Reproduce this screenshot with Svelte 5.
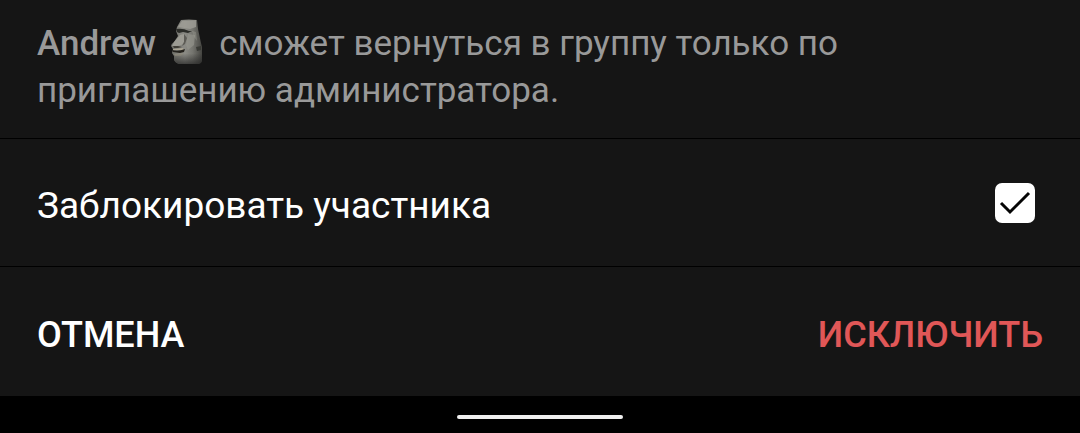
<script>
  let blocked = $state(true);
</script>

<main class="sheet">
  <p class="message">
    <strong>Andrew</strong>
    <svg class="moai" viewBox="0 0 34 46" role="img" aria-label="🗿">
      <defs>
        <linearGradient id="stone" x1="0" y1="0" x2="1" y2="0">
          <stop offset="0" stop-color="#6f6f69" />
          <stop offset=".45" stop-color="#8b8b85" />
          <stop offset=".7" stop-color="#75756f" />
          <stop offset="1" stop-color="#454541" />
        </linearGradient>
        <linearGradient id="base" x1="0" y1="0" x2="0" y2="1">
          <stop offset=".3" stop-color="#222" stop-opacity="0" />
          <stop offset="1" stop-color="#222" stop-opacity=".7" />
        </linearGradient>
      </defs>
      <path fill="url(#stone)" d="M11 1Q19 0 27 1L28 10L31 24L32 28V42Q31 45 27 45H11Q6 45 4 41L4 37L2 34L3 30L1 27Q1 25 4 23L8 17L6 12L7 8Z" />
      <path fill="#a09f97" d="M12 2L26 1L26 8L20 10L8 8Z" opacity=".8" />
      <path fill="#2b2c28" d="M6 10Q13 9 19 12L22 12L18 14L13 13L9 14L7 13Z" />
      <path fill="#9c9b93" d="M10 16L14 15L14 23Q12 27 7 27H2L4 23Z" />
      <path fill="#5c5b55" d="M14 15L17 19L15 25L12 27L14 23Z" />
      <path fill="#403e37" d="M3 27L8 27L12 28L8 29L4 29Z" />
      <path fill="#aaa493" d="M3 30L13 29L14 31H3Z" />
      <path fill="#24221d" d="M2 31Q8 33 15 30L14 33L10 34L3 33Z" />
      <path fill="#8e8b7f" d="M4 35L14 34L11 37H5Z" />
      <path fill="#393a35" d="M26 28L31 27L31 31L27 32Z" />
      <path fill="#97978f" d="M18 15L25 16L24 26L18 31L16 26Z" opacity=".6" />
      <path fill="#a09f97" d="M22 12L26 13L27 22L24 18Z" opacity=".4" />
      <path fill="url(#base)" d="M4 30H32V42Q31 45 27 45H11Q6 45 4 41Z" />
    </svg>
    сможет вернуться в группу только по приглашению администратора.
  </p>

  <label class="option">
    <span>Заблокировать участника</span>
    <span class="check">
      <input type="checkbox" bind:checked={blocked} />
      {#if blocked}
        <svg viewBox="0 0 40 40" aria-hidden="true">
          <path d="M6 20L15 29L34 10" fill="none" stroke="#050505" stroke-width="3" />
        </svg>
      {/if}
    </span>
  </label>

  <div class="actions">
    <button type="button">ОТМЕНА</button>
    <button type="button" class="danger">ИСКЛЮЧИТЬ</button>
  </div>
</main>
<div class="navigation"><span></span></div>

<style>
  :global(body) {
    margin: 0;
    background: #000;
  }
  .sheet {
    background: #151515;
    color: #fff;
    font: 400 37px/46px Roboto, sans-serif;
  }
  .message {
    margin: 0;
    padding: 20px 37px 24px;
    color: #999;
    font-size: 35px;
    line-height: 47px;
  }
  .message strong {
    font-weight: 500;
  }
  .moai {
    width: 34px;
    height: 46px;
    margin: -9px 7px -1px 5px;
    vertical-align: middle;
  }
  .option,
  .actions {
    display: flex;
    align-items: flex-start;
    justify-content: space-between;
    border-top: 1px solid #000;
  }
  .option {
    padding: 44px 45px 37px 37px;
  }
  .actions {
    padding: 45px 37px 38px;
  }
  .check {
    display: grid;
    width: 40px;
    height: 40px;
  }
  .check input,
  .check svg {
    grid-area: 1 / 1;
    width: 40px;
    height: 40px;
    margin: 0;
  }
  .check input {
    appearance: none;
    border-radius: 7px;
    background: #fff;
  }
  .check svg {
    pointer-events: none;
  }
  button {
    border: 0;
    padding: 0;
    background: none;
    color: inherit;
    font: inherit;
    font-size: 36px;
    font-weight: 500;
  }
  .danger {
    color: #e05757;
  }
  .navigation {
    display: flex;
    justify-content: center;
    padding: 19px 0 14px;
  }
  .navigation span {
    width: 166px;
    height: 4px;
    border-radius: 2px;
    background: #f0f0f0;
  }
</style>
